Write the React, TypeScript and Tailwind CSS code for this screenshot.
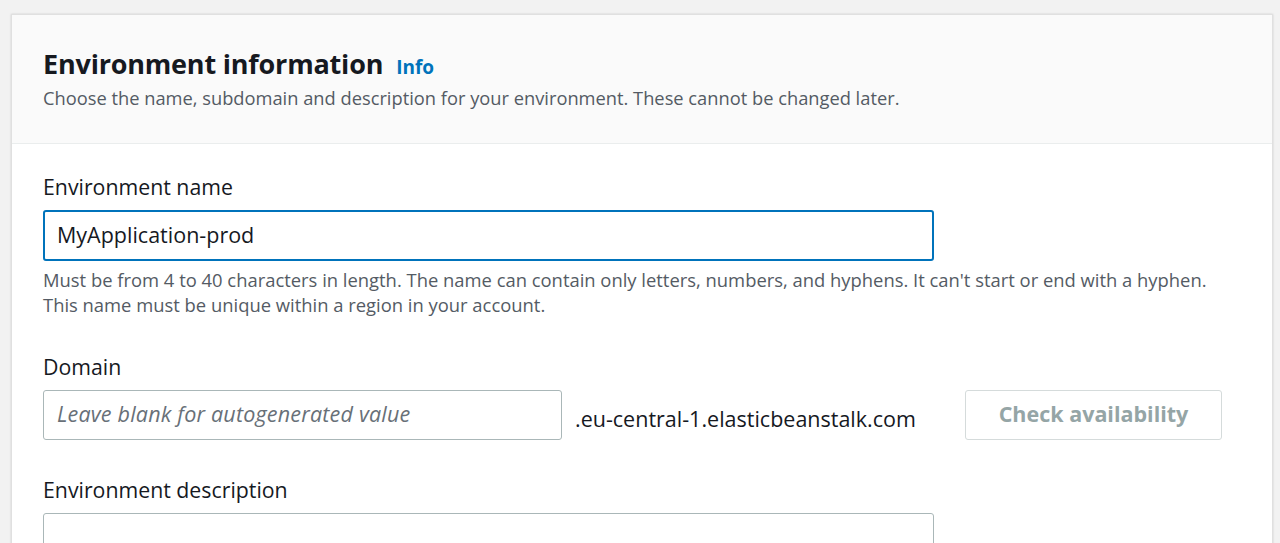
import React from "react";

export default function App() {
  return (
    <div className="w-[1280px] h-[543px] overflow-hidden bg-[#f2f2f2] pt-[14px] pl-[11px] pr-[7px] font-['Open_Sans','Noto_Sans',sans-serif]">
      <div className="bg-white border-l border-r border-t border-[#e0e0e0] shadow-[0_0_2px_rgba(0,0,0,0.15)] h-[600px]">
        <div className="bg-[#fafafa] border-b border-[#eaeded] px-[31px] pt-[32px] pb-[33px]">
          <div className="flex items-baseline gap-[13px]">
            <h2 className="text-[27px] leading-[34px] font-bold text-[#16191f] tracking-[-0.2px]">Environment information</h2>
            <span className="text-[19px] font-bold text-[#0073bb]">Info</span>
          </div>
          <p className="text-[18.3px] leading-[24px] text-[#545b64] mt-[4px]">
            Choose the name, subdomain and description for your environment. These cannot be changed later.
          </p>
        </div>
        <div className="px-[31px] pt-[30px]">
          <div className="text-[21.3px] leading-[26px] text-[#16191f]">Environment name</div>
          <div className="mt-[10px] w-[891px] h-[51px] border-2 border-[#0073bb] rounded-[3px] flex items-center px-[12px] text-[21.5px] text-[#16191f]">
            MyApplication-prod
          </div>
          <div className="mt-[6px] text-[18.4px] leading-[25px] text-[#545b64]">
            <div>Must be from 4 to 40 characters in length. The name can contain only letters, numbers, and hyphens. It can't start or end with a hyphen.</div>
            <div>This name must be unique within a region in your account.</div>
          </div>

          <div className="mt-[37px] text-[21.3px] leading-[26px] text-[#16191f]">Domain</div>
          <div className="mt-[10px] flex items-center">
            <div className="w-[519px] h-[50px] border border-[#aab7b8] rounded-[3px] flex items-center px-[13px] text-[21.5px] italic text-[#687078] tracking-[0.2px]">
              Leave blank for autogenerated value
            </div>
            <div className="ml-[13px] mt-[10px] text-[21.5px] text-[#16191f]">.eu-central-1.elasticbeanstalk.com</div>
            <div className="ml-auto mr-[19px] w-[257px] h-[50px] border border-[#d5dbdb] rounded-[3px] flex items-center justify-center text-[21.5px] font-bold text-[#95a5a6]">
              Check availability
            </div>
          </div>

          <div className="mt-[37px] text-[21.3px] leading-[26px] text-[#16191f]">Environment description</div>
          <div className="mt-[10px] w-[891px] h-[50px] border border-[#aab7b8] rounded-[3px]"></div>
        </div>
      </div>
    </div>
  );
}
